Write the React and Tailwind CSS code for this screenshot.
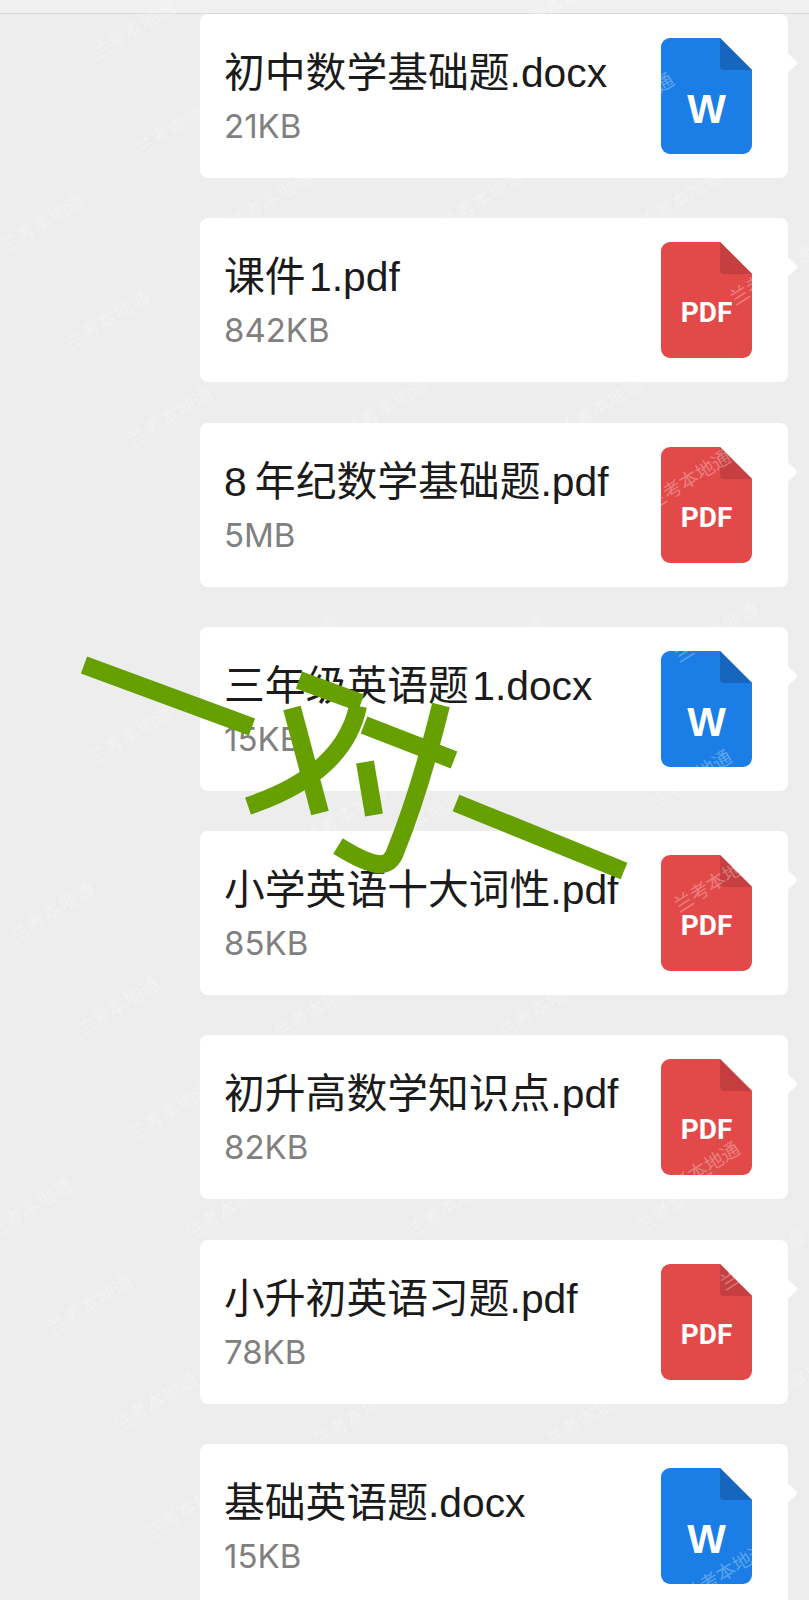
const files = [
  { name: "初中数学基础题.docx", size: "21KB", type: "word" },
  { name: "课件\u200a1.pdf", size: "842KB", type: "pdf" },
  { name: "8\u2009年纪数学基础题.pdf", size: "5MB", type: "pdf" },
  { name: "三年级英语题\u200a1.docx", size: "15KB", type: "word" },
  { name: "小学英语十大词性.pdf", size: "85KB", type: "pdf" },
  { name: "初升高数学知识点.pdf", size: "82KB", type: "pdf" },
  { name: "小升初英语习题.pdf", size: "78KB", type: "pdf" },
  { name: "基础英语题.docx", size: "15KB", type: "word" },
]

// watermark centres, read off the picture
const marks = [
  [133, 30], [177, 125], [42, 223], [107, 320], [170, 417], [270, 200], [482, 200], [680, 200], [555, 6],
  [386, 407], [600, 407], [297, 644], [503, 644], [716, 632], [52, 912], [117, 1007], [170, 1111], [30, 1208],
  [90, 1305], [155, 1402], [187, 1509], [316, 1010], [540, 1008], [227, 1210], [448, 1207], [678, 1203],
  [355, 1417], [588, 1417], [798, 1380], [772, 275], [689, 480], [632, 103], [716, 882], [698, 1172], [762, 1260],
  [726, 1572], [130, 735], [345, 815], [420, 820], [690, 780],
]

function FileIcon({ type }) {
  const word = type === "word"
  return (
    <svg width="91" height="116" viewBox="0 0 91 116" className="shrink-0">
      <path
        d="M9 0H59L91 32V107a9 9 0 0 1-9 9H9a9 9 0 0 1-9-9V9a9 9 0 0 1 9-9Z"
        fill={word ? "#1a7ee6" : "#e24a4a"}
      />
      <path d="M59 0L91 32H63a4 4 0 0 1-4-4Z" fill={word ? "#1666bd" : "#c53f41"} />
      {word ? (
        <text x="45.5" y="85" textAnchor="middle" fill="#fff" fontSize="41" fontWeight="700" fontFamily="Liberation Sans, sans-serif">
          W
        </text>
      ) : (
        <text x="45.5" y="80" textAnchor="middle" fill="#fff" fontSize="28" fontWeight="700" fontFamily="Roboto, sans-serif">
          PDF
        </text>
      )}
    </svg>
  )
}

function FileCard({ file }) {
  return (
    <div className="relative flex h-[164px] items-start justify-between rounded-lg bg-white pl-[24px] pr-9 pt-6">
      <div className="min-w-0 pt-[8px]">
        <div className="whitespace-nowrap text-[40.8px] leading-[54px] text-[#1b1b1b]">{file.name}</div>
        <div className="mt-[3px] font-['Inter',sans-serif] text-[33px] leading-[46px] text-[#808080]">{file.size}</div>
      </div>
      <FileIcon type={file.type} />
      <div className="absolute right-[-7px] top-[42px] h-[14px] w-[14px] rotate-45 rounded-[2px] bg-white" />
    </div>
  )
}

export default function App() {
  return (
    <div className="relative h-[1600px] overflow-hidden bg-[#ededed] font-['Liberation_Sans','Noto_Sans_CJK_SC',sans-serif]">
      <div className="h-[14px] border-b border-[#dcdcdc] bg-[#f0f0f0]" />
      <div className="flex flex-col gap-[40.3px] pl-[200px] pr-[21px]">
        {files.map((file) => (
          <FileCard key={file.name} file={file} />
        ))}
      </div>

      {marks.map(([x, y]) => (
        <div
          key={x + "-" + y}
          className="pointer-events-none absolute w-[100px] -translate-x-1/2 -translate-y-1/2 -rotate-[32deg] whitespace-nowrap text-center text-[19px] leading-none text-white/30"
          style={{ left: x, top: y }}
        >
          兰考本地通
        </div>
      ))}

      {/* handwritten 一对一 */}
      <svg className="pointer-events-none absolute left-0 top-0" width="809" height="1600" fill="none" stroke="#669f00" strokeWidth="18" strokeLinejoin="round">
        <path d="M84 665L252 727" />
        <path d="M299 680L361 703" />
        <path d="M358 706C350 745 320 782 248 806" />
        <path d="M292 708L320 813" />
        <path d="M364 725L454 760" />
        <path d="M441 705C425 770 410 815 396 850C390 868 378 871 338 846" />
        <path d="M365 762L374 815" />
        <path d="M456 803L624 871" />
      </svg>
    </div>
  )
}
